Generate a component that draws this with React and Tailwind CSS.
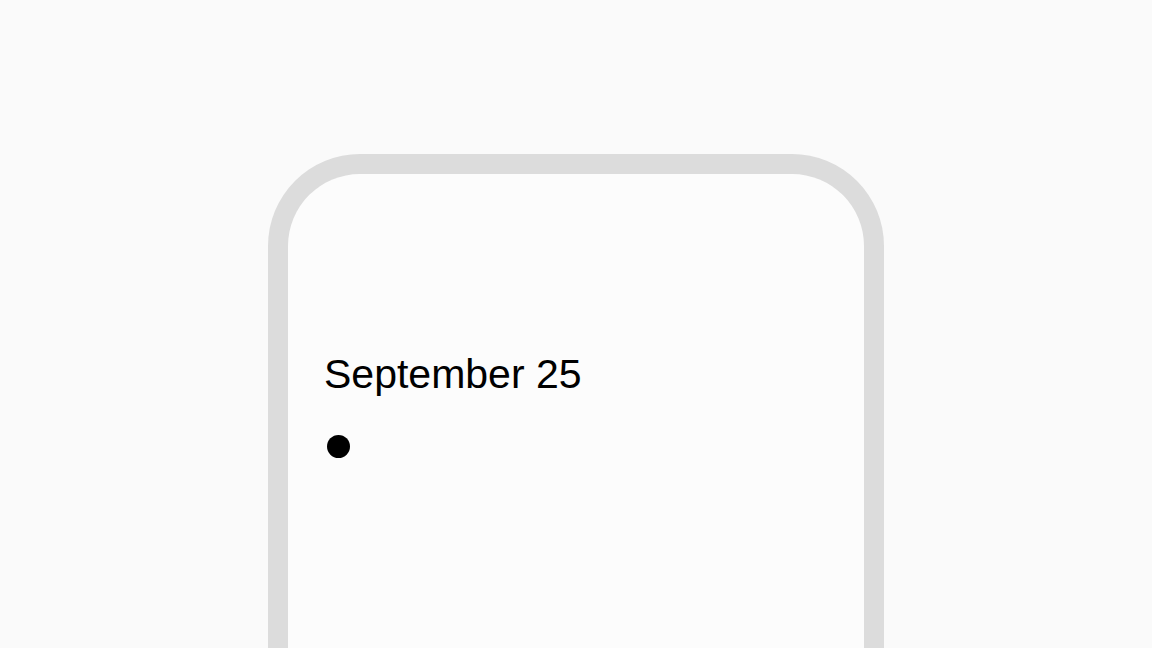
export default function App() {
  return (
    <div className="h-[648px] overflow-hidden bg-[#fafafa] flex justify-center pt-[154px]" style={{ fontFamily: '"Liberation Sans", Arial, sans-serif' }}>
      <div className="w-[616px] h-[620px] shrink-0 rounded-t-[92px] border-[20px] border-b-0 border-[#dcdcdc] bg-[#fcfcfc] pl-[36px] pt-[176px]">
        <h1 className="text-[41px] leading-[48px] text-black">September 25</h1>
        <div className="mt-[37px] ml-[3px] h-[23px] w-[23px] rounded-full bg-black" />
      </div>
    </div>
  );
}
